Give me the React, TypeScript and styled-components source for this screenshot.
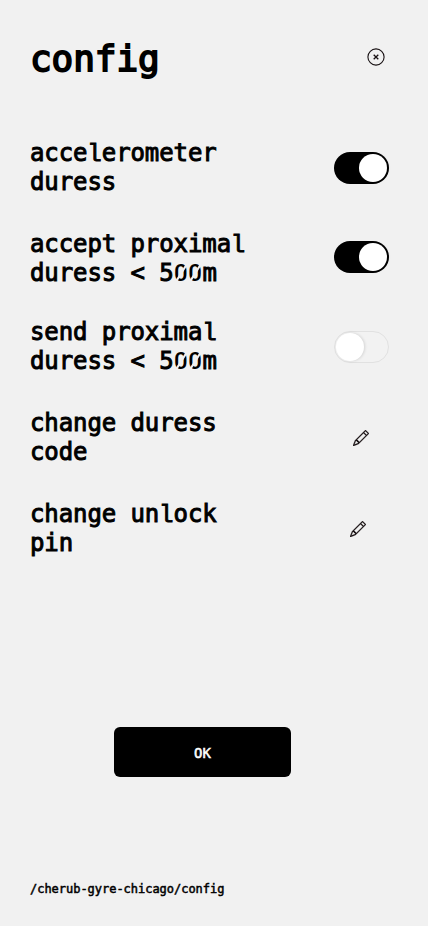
import React, { useState } from 'react';
import styled, { createGlobalStyle } from 'styled-components';
import { BsPencil } from 'react-icons/bs';

const GlobalStyle = createGlobalStyle`
  *, *::before, *::after { box-sizing: border-box; }
  body { margin: 0; background: #f1f1f1; color: #000; }
  button { border: 0; padding: 0; background: none; color: inherit; font: inherit; cursor: pointer; }
`;

const Screen = styled.main`
  display: flex;
  flex-direction: column;
  width: 428px;
  height: 926px;
  padding: 37px 39px 26px 30px;
  font-family: 'DejaVu Sans Mono', monospace;
  overflow: hidden;
`;

const Header = styled.header`
  display: flex;
  justify-content: space-between;
  height: 102px;
  padding-right: 4px;
`;

const Title = styled.h1`
  margin: 0;
  font-size: 36px;
  font-weight: 400;
  line-height: 44px;
  letter-spacing: -0.07px;
  -webkit-text-stroke: 1.8px #000;
`;

const CloseButton = styled.button`
  display: flex;
  width: 18px;
  height: 18px;
  margin-top: 11px;
`;

const Row = styled.section<{ $gap: number }>`
  display: flex;
  justify-content: space-between;
  height: 58px;
  margin-bottom: ${({ $gap }) => $gap}px;
`;

const Label = styled.h2`
  margin: 0;
  width: 230px;
  font-size: 24px;
  font-weight: 400;
  line-height: 29px;
  letter-spacing: -0.09px;
  white-space: pre-line;
  -webkit-text-stroke: 0.95px #000;
`;

const Zero = styled.span`
  position: relative;
  display: inline-block;
  width: 14.4px;
  height: 29px;
  vertical-align: top;
  text-align: center;
  font-family: Roboto, sans-serif;
  font-weight: 500;
  letter-spacing: 0;
  -webkit-text-stroke: 0;

  &::after {
    content: '';
    position: absolute;
    left: 6.4px;
    top: 3px;
    width: 1.5px;
    height: 23px;
    background: #f1f1f1;
    transform: rotate(32deg);
  }
`;

const FlatL = styled.span`
  display: inline-block;
  width: 14.36px;
  font-family: 'Liberation Mono', monospace;
  line-height: 1;
  letter-spacing: 0;
  text-indent: -0.2px;
  -webkit-text-stroke: 0.9px #000;
`;

const Toggle = styled.button<{ $on: boolean; $top: number }>`
  display: flex;
  align-items: center;
  justify-content: ${({ $on }) => ($on ? 'flex-end' : 'flex-start')};
  width: 55px;
  height: 32px;
  margin-top: ${({ $top }) => $top}px;
  padding: ${({ $on }) => ($on ? '2px' : '0 0 1px 1px')};
  border-radius: 16px;
  border: ${({ $on }) => ($on ? '0' : '1px solid #e1e1e1')};
  background: ${({ $on }) => ($on ? '#000' : '#f2f2f2')};
`;

const Knob = styled.span`
  width: 28px;
  height: 28px;
  border-radius: 50%;
  background: #fff;
  box-shadow: 1px 0 3px rgba(0, 0, 0, 0.13);
`;

const EditButton = styled.button<{ $top: number; $right: number }>`
  display: flex;
  width: 16px;
  height: 16px;
  margin: ${({ $top, $right }) => `${$top}px ${$right}px 0 0`};
  color: #171012;

  svg { stroke-width: 0.25px; }
`;

const Confirm = styled.button`
  width: 177px;
  height: 50px;
  margin: auto 0 99px 84px;
  padding-top: 1px;
  border-radius: 6px;
  background: #000;
  color: #fff;
  font-size: 14px;
  -webkit-text-stroke: 0.5px #fff;
`;

const Path = styled.footer`
  height: 24px;
  padding-top: 3px;
  font-size: 12px;
  line-height: 21px;
  letter-spacing: -0.025px;
  -webkit-text-stroke: 0.5px #000;
`;

function LabelText({ text }: { text: string }) {
  return (
    <Label>
      {text.split(/([0l])/).map((part, i) =>
        part === '0' ? <Zero key={i}>0</Zero> : part === 'l' ? <FlatL key={i}>l</FlatL> : part,
      )}
    </Label>
  );
}

const settings = [
  { text: 'accelerometer\nduress', on: true, top: 13, gap: 33 },
  { text: 'accept proximal\nduress < 500m', on: true, top: 11, gap: 30 },
  { text: 'send proximal\nduress < 500m', on: false, top: 13, gap: 33 },
];

const edits = [
  { text: 'change duress\ncode', top: 21, right: 20, gap: 33 },
  { text: 'change unlock\npin', top: 21, right: 23, gap: 0 },
];

export default function App() {
  const [states, setStates] = useState(settings.map((s) => s.on));
  const flip = (index: number) => setStates(states.map((on, i) => (i === index ? !on : on)));

  return (
    <Screen>
      <GlobalStyle />
      <Header>
        <Title>config</Title>
        <CloseButton aria-label="close">
          <svg width="18" height="18" viewBox="0 0 18 18" fill="none" stroke="#171012">
            <circle cx="9" cy="9" r="8.1" strokeWidth="1.1" />
            <path d="M6.7 6.7l4.6 4.6M11.3 6.7l-4.6 4.6" strokeWidth="1.3" />
          </svg>
        </CloseButton>
      </Header>
      {settings.map((s, i) => (
        <Row key={s.text} $gap={s.gap}>
          <LabelText text={s.text} />
          <Toggle role="switch" aria-checked={states[i]} $on={states[i]} $top={s.top} onClick={() => flip(i)}>
            <Knob />
          </Toggle>
        </Row>
      ))}
      {edits.map((e) => (
        <Row key={e.text} $gap={e.gap}>
          <LabelText text={e.text} />
          <EditButton aria-label="edit" $top={e.top} $right={e.right}>
            <BsPencil size={16} />
          </EditButton>
        </Row>
      ))}
      <Confirm>OK</Confirm>
      <Path>/cherub-gyre-chicago/config</Path>
    </Screen>
  );
}
